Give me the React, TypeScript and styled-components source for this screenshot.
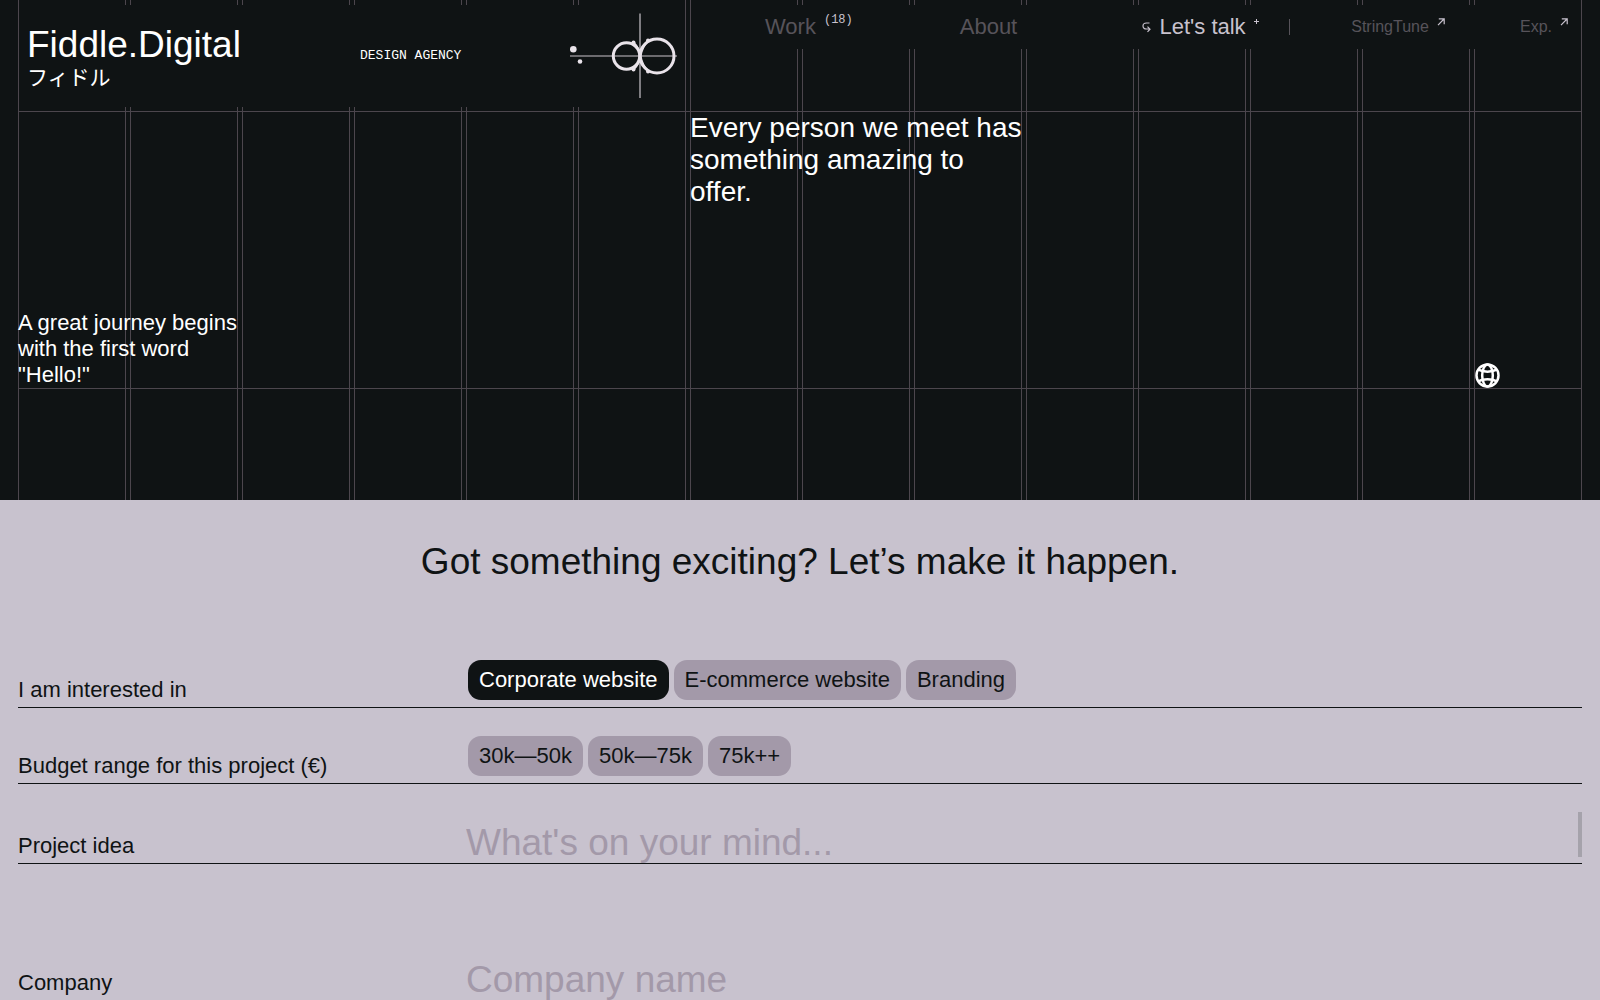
import React, { useState } from "react";
import styled, { createGlobalStyle } from "styled-components";

const ink = "#0f1314";
const lilac = "#c8c2ce";
const mauve = "#a399a9";
const line = "#4c464d";
const muted = "#57535a";
const sans = `"Liberation Sans", "Noto Sans CJK JP", Arial, sans-serif`;
const mono = `"Liberation Mono", monospace`;

const GlobalStyle = createGlobalStyle`
  *, *::before, *::after { box-sizing: border-box; }
  body { margin: 0; background: ${lilac}; color: ${ink}; font-family: ${sans}; }
  h1, p { margin: 0; font-weight: 400; }
  a { color: inherit; text-decoration: none; }
`;

const Page = styled.div`
  overflow-x: hidden;
`;

const Columns = styled.div`
  display: grid;
  grid-template-columns: repeat(14, minmax(0, 1fr));
  column-gap: 4px;
`;

const Hero = styled.div`
  display: grid;
  padding: 0 18px;
  background: ${ink};
  color: #fff;
`;

const Guides = styled(Columns)`
  grid-area: 1 / 1;
`;

const Guide = styled.span`
  border: solid ${line};
  border-width: 0 1px;
`;

const HeroContent = styled.div`
  grid-area: 1 / 1;
  position: relative;
  padding-bottom: 111px;
`;

const Header = styled(Columns)`
  min-height: 112px;
  align-items: start;
  border-bottom: 1px solid ${line};
`;

const Brand = styled.div`
  grid-column: span 6;
  display: grid;
  grid-template-columns: 333fr 210fr 107fr;
  align-items: center;
  height: 102px;
  margin: 5px 1px 0;
  padding: 0 8px;
  background: ${ink};
`;

const Logo = styled.a`
  font-size: 37px;
  line-height: 44px;
`;

const Kana = styled.span`
  display: block;
  font-size: 21px;
  line-height: 22px;
`;

const Tagline = styled.span`
  font: 13px/16px ${mono};
`;

const Nav = styled.nav`
  grid-column: span 8;
  display: grid;
  grid-template-columns: 195fr 183fr 147fr 62fr 169fr 48fr;
  align-items: center;
  height: 44px;
  margin: 5px 1px 0;
  padding: 0 13px 0 74px;
  background: ${ink};
`;

const NavLink = styled.a<{ $small?: boolean; $active?: boolean }>`
  display: flex;
  align-items: center;
  gap: 8px;
  font-size: ${(p) => (p.$small ? 16 : 22)}px;
  line-height: 28px;
  white-space: nowrap;
  color: ${(p) => (p.$active ? lilac : muted)};

  svg { flex: none; color: ${lilac}; }
`;

const Count = styled.sup`
  align-self: flex-start;
  font: 12px/14px ${mono};
  color: ${lilac};
`;

const Raised = styled.span`
  display: flex;
  padding-bottom: 11px;
`;

const Divider = styled.span`
  width: 1px;
  height: 16px;
  background: ${muted};
`;

const HeroBody = styled(Columns)`
  min-height: 277px;
  border-bottom: 1px solid ${line};
`;

const Greeting = styled.p`
  grid-column: 1 / span 3;
  align-self: end;
  font-size: 22px;
  line-height: 26px;
`;

const Statement = styled.p`
  grid-column: 7 / span 4;
  font-size: 28px;
  line-height: 32px;
`;

const GlobeButton = styled.button`
  grid-column: 14;
  place-self: end start;
  display: flex;
  padding: 0 1px;
  border: 0;
  background: none;
  color: #fff;
`;

const Form = styled.form`
  padding: 40px 18px 20px;
`;

const Title = styled.h1`
  margin-bottom: 76px;
  font-size: 37px;
  line-height: 44px;
  text-align: center;
`;

const Row = styled(Columns)<{ $gap?: number }>`
  align-items: end;
  margin-top: ${(p) => p.$gap ?? 0}px;
  border-bottom: 1px solid ${ink};
`;

const Label = styled.label`
  grid-column: span 4;
  padding-bottom: 4px;
  font-size: 22px;
  line-height: 26px;
`;

const Pills = styled.div`
  grid-column: span 10;
  display: flex;
  gap: 5px;
  padding: 0 2px 7px;
`;

const Pill = styled.label<{ $on: boolean }>`
  position: relative;
  padding: 0 11px;
  border-radius: 13px;
  font-size: 22px;
  line-height: 40px;
  background: ${(p) => (p.$on ? ink : mauve)};
  color: ${(p) => (p.$on ? "#fff" : ink)};
  cursor: pointer;

  input {
    position: absolute;
    inset: 0;
    margin: 0;
    appearance: none;
    border-radius: inherit;
    cursor: pointer;
  }
`;

const Field = styled.div`
  grid-column: span 10;
  display: flex;
  align-items: flex-start;

  input, textarea {
    flex: 1;
    min-width: 0;
    height: 51px;
    margin: 0;
    padding: 11px 0 0;
    border: 0;
    outline: 0;
    resize: none;
    overflow: hidden;
    background: none;
    color: ${ink};
    font: 37px/40px ${sans};
  }

  ::placeholder { color: ${mauve}; opacity: 1; }
`;

const ScrollBar = styled.span`
  width: 4px;
  height: 45px;
  background: #a5a2ab;
`;

const LogoMark = () => (
  <svg width="107" height="86" viewBox="0 0 107 86" fill="none" stroke="#e9e3ea">
    <path d="M0 43H107M70 0.5V85" strokeWidth="1.2" stroke="#c9c4ca" />
    <circle cx="56.5" cy="43" r="13.2" strokeWidth="3" />
    <circle cx="87" cy="43" r="17" strokeWidth="3" />
    <path d="M64 30Q69 35 70.500 43Q72 52 78 58M64 56Q69 51 70.500 43Q72 34 78 28" strokeWidth="2" />
    <g fill="#e9e3ea" stroke="none">
      <circle cx="3.3" cy="36.3" r="3.3" />
      <circle cx="10" cy="48.5" r="2.3" />
      <circle cx="63.500" cy="29.500" r="2" />
      <circle cx="63.500" cy="56.500" r="2" />
      <circle cx="78" cy="27.500" r="2" />
      <circle cx="78" cy="58.500" r="2" />
    </g>
  </svg>
);

const ArrowUpRight = () => (
  <svg width="8" height="8" viewBox="0 0 8 8" fill="none" stroke="currentColor" strokeWidth="1.2">
    <path d="M1 7.200L7 1M1.800.8H7.200V6.200" />
  </svg>
);

const Plus = () => (
  <svg width="5" height="5" viewBox="0 0 5 5" stroke="currentColor">
    <path d="M2.500 0V5M0 2.500H5" />
  </svg>
);

const Hook = () => (
  <svg width="9" height="11" viewBox="0 0 9 11" fill="none" stroke="currentColor" strokeWidth="1.2">
    <path d="M7.500 1H4.500C2.300 1 1 2.200 1 4S2.300 7 4.500 7H8M5.500 4.700L8 7.200L5.500 9.800" />
  </svg>
);

const Globe = () => (
  <svg width="25" height="25" viewBox="0 0 25 25" fill="none" stroke="currentColor" strokeWidth="2.5">
    <circle cx="12.500" cy="12.500" r="11" />
    <ellipse cx="12.500" cy="12.500" rx="5.300" ry="11" />
    <path d="M3.200 6.700C8 9.300 17 9.300 21.800 6.700M3.200 18.300C8 15.700 17 15.700 21.800 18.300" />
  </svg>
);

const services = ["Corporate website", "E-commerce website", "Branding"];
const budgets = ["30k—50k", "50k—75k", "75k++"];

type PillGroupProps = {
  name: string;
  labelId: string;
  options: string[];
  value: string;
  onChange: (value: string) => void;
};

const PillGroup = ({ name, labelId, options, value, onChange }: PillGroupProps) => (
  <Pills role="radiogroup" aria-labelledby={labelId}>
    {options.map((option) => (
      <Pill key={option} $on={option === value}>
        <input type="radio" name={name} checked={option === value} onChange={() => onChange(option)} />
        {option}
      </Pill>
    ))}
  </Pills>
);

export default function App() {
  const [service, setService] = useState(services[0]);
  const [budget, setBudget] = useState("");

  return (
    <Page>
      <GlobalStyle />
      <Hero>
        <Guides aria-hidden="true">
          {Array.from({ length: 14 }, (_, i) => (
            <Guide key={i} />
          ))}
        </Guides>
        <HeroContent>
          <Header as="header">
            <Brand>
              <Logo href="#">
                Fiddle.Digital
                <Kana lang="ja">フィドル</Kana>
              </Logo>
              <Tagline>DESIGN AGENCY</Tagline>
              <LogoMark />
            </Brand>
            <Nav>
              <NavLink href="#work">
                Work <Count>(18)</Count>
              </NavLink>
              <NavLink href="#about">About</NavLink>
              <NavLink href="#talk" $active>
                <Hook />
                Let's talk
                <Raised><Plus /></Raised>
              </NavLink>
              <Divider />
              <NavLink href="#stringtune" $small>
                StringTune <Raised><ArrowUpRight /></Raised>
              </NavLink>
              <NavLink href="#exp" $small>
                Exp. <Raised><ArrowUpRight /></Raised>
              </NavLink>
            </Nav>
          </Header>
          <HeroBody>
            <Greeting>
              A great journey begins
              <br />
              with the first word
              <br />
              "Hello!"
            </Greeting>
            <Statement>
              Every person we meet has
              <br />
              something amazing to
              <br />
              offer.
            </Statement>
            <GlobeButton type="button" aria-label="Language">
              <Globe />
            </GlobeButton>
          </HeroBody>
        </HeroContent>
      </Hero>

      <Form onSubmit={(e) => e.preventDefault()}>
        <Title>Got something exciting? Let’s make it happen.</Title>
        <Row>
          <Label as="span" id="service-label">I am interested in</Label>
          <PillGroup name="service" labelId="service-label" options={services} value={service} onChange={setService} />
        </Row>
        <Row $gap={28}>
          <Label as="span" id="budget-label">Budget range for this project (€)</Label>
          <PillGroup name="budget" labelId="budget-label" options={budgets} value={budget} onChange={setBudget} />
        </Row>
        <Row $gap={28}>
          <Label htmlFor="idea">Project idea</Label>
          <Field>
            <textarea id="idea" rows={1} placeholder="What's on your mind..." />
            <ScrollBar />
          </Field>
        </Row>
        <Row $gap={85}>
          <Label htmlFor="company">Company</Label>
          <Field>
            <input id="company" type="text" placeholder="Company name" />
          </Field>
        </Row>
      </Form>
    </Page>
  );
}
